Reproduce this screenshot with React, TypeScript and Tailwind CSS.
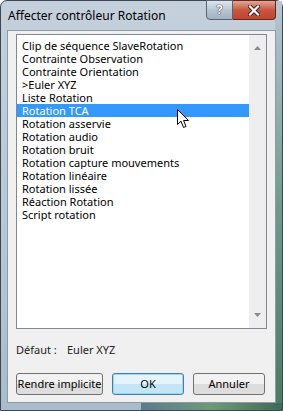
import { useState } from 'react'

const items = [
  'Clip de séquence SlaveRotation',
  'Contrainte Observation',
  'Contrainte Orientation',
  '>Euler XYZ',
  'Liste Rotation',
  'Rotation TCA',
  'Rotation asservie',
  'Rotation audio',
  'Rotation bruit',
  'Rotation capture mouvements',
  'Rotation linéaire',
  'Rotation lissée',
  'Réaction Rotation',
  'Script rotation',
]

const font = { fontFamily: '"Noto Sans", Arial, sans-serif' }

function Cursor() {
  return (
    <svg width="13" height="20" viewBox="0 0 13 20" className="absolute left-[176px] top-[108px]">
      <path d="M0.5 0.5 L0.5 15.5 L4 12.2 L6.5 18.5 L9 17.4 L6.6 11.5 L11.5 11.5 Z" fill="#fff" stroke="#000" strokeWidth="1" strokeLinejoin="round" />
    </svg>
  )
}

export default function App() {
  const [selected, setSelected] = useState(5)

  return (
    <div className="w-[283px] h-[411px] text-[11px] text-black" style={font}>
      {/* cadre de la fenêtre */}
      <div className="relative flex h-full flex-col rounded-t-[7px] border border-[#3c4654] bg-gradient-to-b from-[#c4d0dc] via-[#b9c8d6] to-[#a9bccb]">
        <div className="pointer-events-none absolute inset-y-0 right-0 w-[7px] bg-gradient-to-b from-[#b7c6d2] via-[#6f9a8a] to-[#4a7a62]" />
        <div className="pointer-events-none absolute bottom-0 left-[140px] right-0 h-[7px] bg-gradient-to-r from-[#5d7a8a] via-[#6f9a78] to-[#3e6a54]" />

        {/* barre de titre */}
        <div className="relative flex h-[29px] shrink-0 items-start">
          <span className="ml-[7px] mt-[7px] text-[12px] leading-[16px] text-black">Affecter contrôleur Rotation</span>
          <div className="absolute right-[6px] top-[-1px] flex">
            <div className="flex h-[20px] w-[27px] items-center justify-center rounded-bl-[4px] border border-[#5a6470] bg-gradient-to-b from-[#dfe6ee] via-[#b8c6d4] to-[#9fb0c2] text-[13px] font-bold text-white [text-shadow:0_0_1px_#222,0_0_1px_#222]">
              ?
            </div>
            <div className="flex h-[20px] w-[43px] items-center justify-center rounded-br-[4px] border border-l-0 border-[#5a2a20] bg-gradient-to-b from-[#e3a497] via-[#c9553f] to-[#c1452f]">
              <svg width="12" height="11" viewBox="0 0 12 11">
                <path d="M2 1.5 L10 9.5 M10 1.5 L2 9.5" stroke="#3a1a14" strokeWidth="4" strokeLinecap="square" />
                <path d="M2 1.5 L10 9.5 M10 1.5 L2 9.5" stroke="#fff" strokeWidth="2.2" strokeLinecap="square" />
              </svg>
            </div>
          </div>
        </div>

        {/* zone cliente */}
        <div className="relative mx-[6px] mb-[7px] flex flex-1 flex-col border border-[#8e9aa6] bg-[#f0f0f0] px-[8px] pt-[3px]">
          {/* liste */}
          <div className="flex h-[295px] border border-[#828790] bg-white">
            <div className="flex-1 pt-[4px]">
              {items.map((item, i) => (
                <div
                  key={item}
                  onClick={() => setSelected(i)}
                  className={`h-[13px] overflow-hidden pl-[5px] leading-[13px] whitespace-nowrap ${
                    i === selected ? 'bg-[#3399ff] text-white' : 'text-black'
                  }`}
                >
                  {item}
                </div>
              ))}
            </div>
            <div className="flex w-[17px] flex-col items-center justify-between bg-[#eeeeee] py-[11px]">
              <svg width="7" height="4" viewBox="0 0 7 4"><path d="M0 4 L3.5 0 L7 4 Z" fill="#8a8a8a" /></svg>
              <svg width="7" height="4" viewBox="0 0 7 4"><path d="M0 0 L3.5 4 L7 0 Z" fill="#8a8a8a" /></svg>
            </div>
          </div>

          {/* défaut */}
          <div className="mt-[13px] flex leading-[15px] text-[#222]">
            <span className="w-[51px]">Défaut :</span>
            <span>Euler XYZ</span>
          </div>

          {/* boutons */}
          <div className="mt-[16px] flex gap-[9px]">
            <button className="h-[22px] w-[87px] whitespace-nowrap rounded-[3px] border border-[#707070] bg-gradient-to-b from-[#f2f2f2] from-50% to-[#dddddd] to-50% text-[11px] text-black">
              Rendre implicite
            </button>
            <button className="h-[22px] w-[72px] rounded-[3px] border border-[#3c7fb1] bg-gradient-to-b from-[#e5f4fc] from-50% to-[#c4e5f6] to-50% text-[11px] text-black shadow-[inset_0_0_0_1px_#9ed7f5]">
              OK
            </button>
            <button className="h-[22px] w-[72px] rounded-[3px] border border-[#707070] bg-gradient-to-b from-[#f2f2f2] from-50% to-[#dddddd] to-50% text-[11px] text-black">
              Annuler
            </button>
          </div>
        </div>

        <Cursor />
      </div>
    </div>
  )
}
